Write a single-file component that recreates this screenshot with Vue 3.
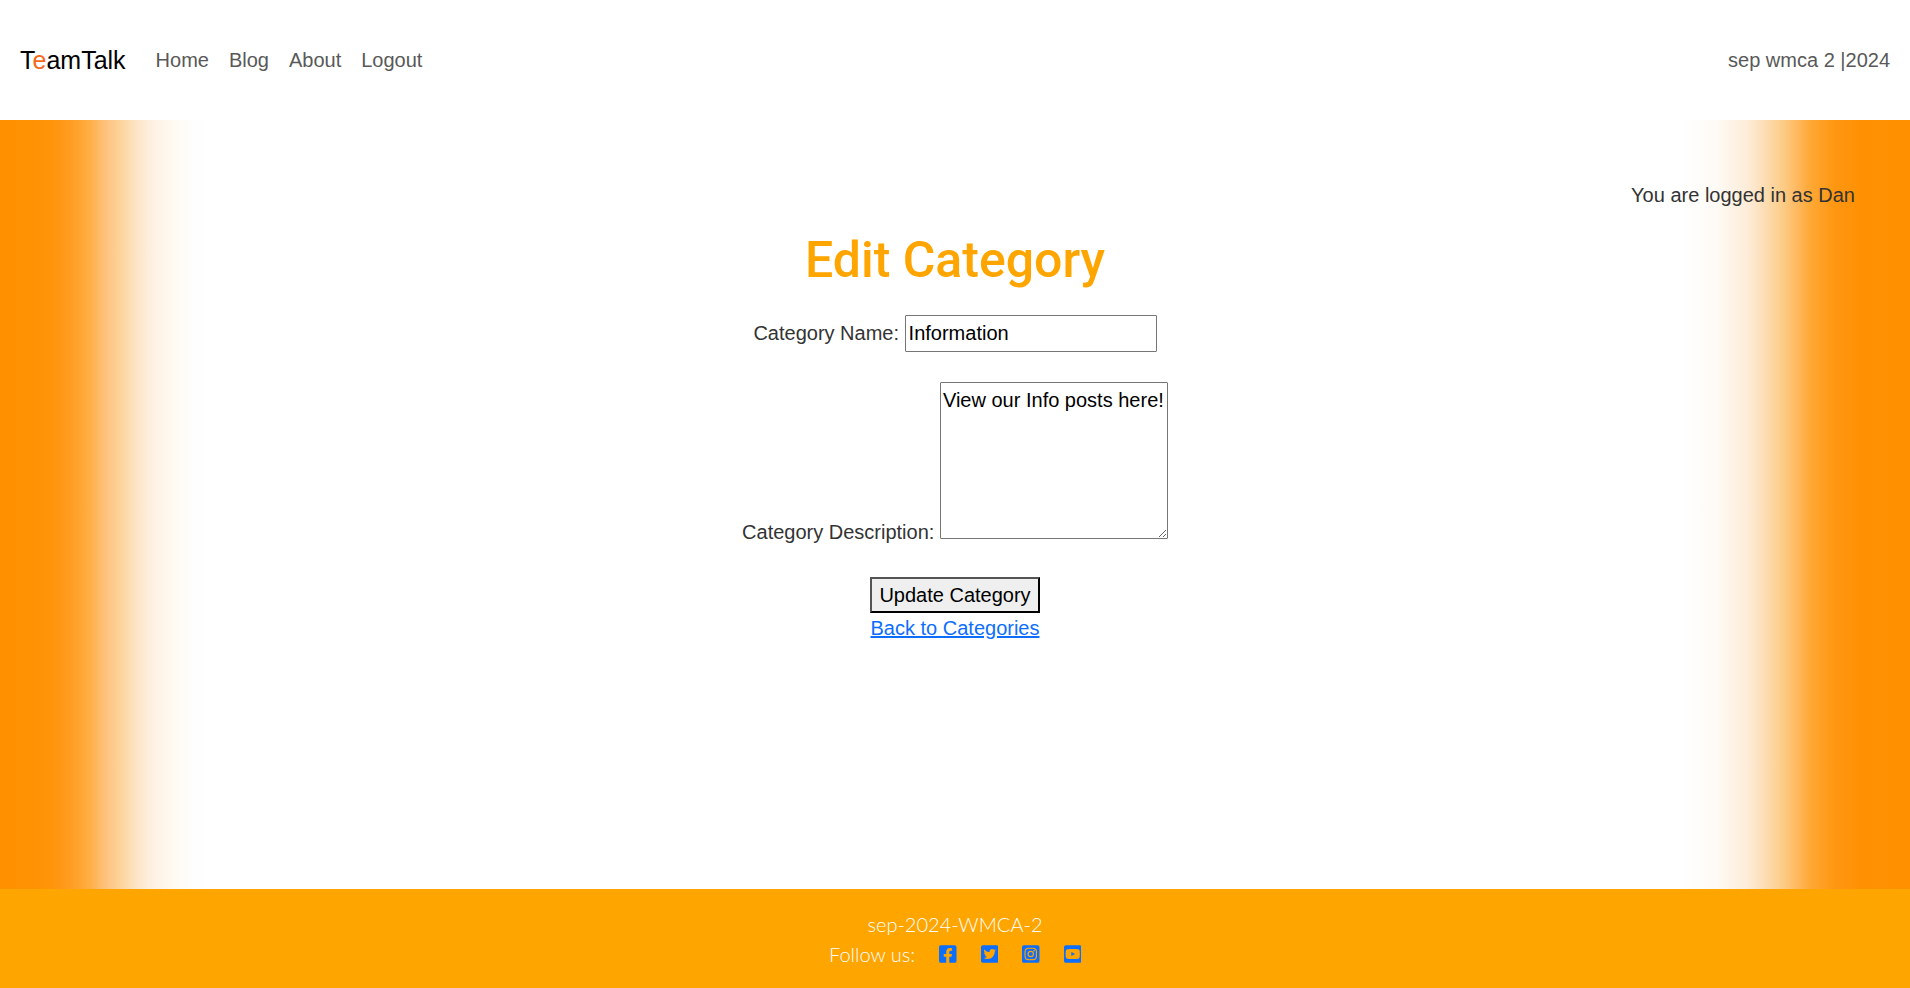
<script setup>
import { ref } from 'vue'

const navLinks = ['Home', 'Blog', 'About', 'Logout']
const name = ref('Information')
const description = ref('View our Info posts here!')

const socials = [
  {
    label: 'Facebook',
    path: 'M400 32H48A48 48 0 0 0 0 80v352a48 48 0 0 0 48 48h137.25V327.69h-63V256h63v-54.64c0-62.15 37-96.48 93.67-96.48 27.14 0 55.52 4.84 55.52 4.84v61h-31.27c-30.81 0-40.42 19.12-40.42 38.73V256h68.78l-11 71.69h-57.78V480H400a48 48 0 0 0 48-48V80a48 48 0 0 0-48-48z',
  },
  {
    label: 'Twitter',
    path: 'M400 32H48C21.5 32 0 53.5 0 80v352c0 26.5 21.5 48 48 48h352c26.5 0 48-21.5 48-48V80c0-26.5-21.5-48-48-48zm-48.9 158.8c.2 2.8.2 5.7.2 8.5 0 86.7-66 186.6-186.6 186.6-37.2 0-71.7-10.8-100.7-29.4 5.3.6 10.4.8 15.8.8 30.7 0 58.9-10.4 81.4-28-28.8-.6-53-19.5-61.3-45.5 10.1 1.5 19.2 1.5 29.6-1.2-30-6.1-52.5-32.5-52.5-64.4v-.8c8.7 4.9 18.9 7.9 29.6 8.3a65.447 65.447 0 0 1-29.2-54.6c0-12.2 3.2-23.4 8.9-33.1 32.3 39.8 80.8 65.8 135.2 68.6-9.3-44.5 24-80.6 64-80.6 18.9 0 35.9 7.9 47.9 20.7 14.8-2.8 29-8.3 41.6-15.8-4.9 15.2-15.2 28-28.8 36.1 13.2-1.4 26-5.1 37.8-10.2-8.9 13.1-20.1 24.7-32.9 34z',
  },
  {
    label: 'Instagram',
    path: 'M224,202.66A53.34,53.34,0,1,0,277.36,256,53.38,53.38,0,0,0,224,202.66Zm124.71-41a54,54,0,0,0-30.41-30.41c-21-8.29-71-6.43-94.3-6.43s-73.25-1.93-94.31,6.43a54,54,0,0,0-30.41,30.41c-8.28,21-6.43,71.05-6.43,94.33S91,329.26,99.32,350.33a54,54,0,0,0,30.41,30.41c21,8.29,71,6.43,94.31,6.43s73.24,1.93,94.3-6.43a54,54,0,0,0,30.41-30.41c8.35-21,6.43-71.05,6.43-94.33S357.1,182.74,348.75,161.67ZM224,338a82,82,0,1,1,82-82A81.9,81.9,0,0,1,224,338Zm85.38-148.3a19.14,19.14,0,1,1,19.13-19.14A19.1,19.1,0,0,1,309.42,189.74ZM400,32H48A48,48,0,0,0,0,80V432a48,48,0,0,0,48,48H400a48,48,0,0,0,48-48V80A48,48,0,0,0,400,32ZM382.88,322c-1.29,25.63-7.14,48.34-25.85,67s-41.4,24.63-67,25.85c-26.41,1.49-105.59,1.49-132,0-25.63-1.29-48.26-7.15-67-25.85s-24.63-41.42-25.85-67c-1.49-26.42-1.49-105.61,0-132,1.29-25.63,7.07-48.34,25.85-67s41.47-24.56,67-25.78c26.41-1.49,105.59-1.49,132,0,25.63,1.29,48.33,7.15,67,25.85s24.63,41.42,25.85,67.05C384.37,216.44,384.37,295.56,382.88,322Z',
  },
  {
    label: 'YouTube',
    path: 'M186.8 202.1l95.2 54.1-95.2 54.1V202.1zM448 80v352c0 26.5-21.5 48-48 48H48c-26.5 0-48-21.5-48-48V80c0-26.5 21.5-48 48-48h352c26.5 0 48 21.5 48 48zm-42 176.3s0-59.6-7.6-88.2c-4.2-15.8-16.5-28.2-32.2-32.4C337.9 128 224 128 224 128s-113.9 0-142.2 7.7c-15.7 4.2-28 16.6-32.2 32.4-7.6 28.5-7.6 88.2-7.6 88.2s0 59.6 7.6 88.2c4.2 15.8 16.5 27.7 32.2 31.9C110.1 384 224 384 224 384s113.9 0 142.2-7.7c15.7-4.2 28-16.1 32.2-31.9 7.6-28.5 7.6-88.1 7.6-88.1z',
  },
]
</script>

<template>
  <div class="page">
    <header class="header">
      <a class="brand" href="#">T<span class="accent">e</span>amTalk</a>
      <nav class="nav">
        <a v-for="link in navLinks" :key="link" class="nav-link" href="#">{{ link }}</a>
      </nav>
      <span class="cohort">sep wmca 2 |2024</span>
    </header>

    <main class="main">
      <p class="status">You are logged in as Dan</p>
      <h1 class="title">Edit Category</h1>
      <form class="form" @submit.prevent>
        <div class="row">
          <label for="name">Category Name: </label>
          <input id="name" v-model="name" class="field name" type="text" />
        </div>
        <div class="row">
          <label for="description">Category Description: </label>
          <textarea id="description" v-model="description" class="field description"></textarea>
        </div>
        <button class="submit" type="submit">Update Category</button>
      </form>
      <a class="back" href="#">Back to Categories</a>
    </main>

    <footer class="footer">
      <div>sep-2024-WMCA-2</div>
      <div class="follow">
        <span>Follow us:</span>
        <a v-for="s in socials" :key="s.label" class="social" href="#" :aria-label="s.label">
          <svg class="icon" viewBox="0 0 448 512" aria-hidden="true"><path :d="s.path" /></svg>
        </a>
      </div>
    </footer>
  </div>
</template>

<style>
body {
  margin: 0;
}
</style>

<style scoped>
.page {
  display: flex;
  flex-direction: column;
  min-height: 100vh;
  font: 20px/30px "Liberation Sans", Arial, sans-serif;
  color: #333;
  background: #fff;
}

.header {
  display: flex;
  align-items: center;
  min-height: 120px;
  padding: 0 20px;
  box-sizing: border-box;
  background: #fff;
}

.brand {
  margin-right: 30px;
  font-size: 25px;
  color: #000;
  text-decoration: none;
}

.accent {
  color: #f46a1b;
}

.nav {
  display: flex;
  gap: 20px;
}

.nav-link {
  color: #595959;
  text-decoration: none;
}

.cohort {
  margin-left: auto;
  color: #595959;
}

.main {
  display: flex;
  flex: 1;
  flex-direction: column;
  align-items: center;
  padding: 60px 55px;
  background: linear-gradient(
    90deg,
    #ff9100 0%,
    #ff9203 1.6%,
    #ff940a 2.6%,
    #ff9715 3.2%,
    #ffa028 3.9%,
    #ffae45 4.7%,
    #fdc27c 5.5%,
    #fdd39a 6.3%,
    #fde5c8 7.2%,
    #fdf1e3 8%,
    #fffaf2 9.1%,
    #fefefe 10.2%,
    #fff 11.2%,
    #fff 88%,
    #fefaf5 89.9%,
    #fdf3e5 90.7%,
    #fdecd8 91.5%,
    #fddfb8 92.3%,
    #fccb84 93.4%,
    #ffb85f 94.1%,
    #ffa835 94.8%,
    #ff9713 96%,
    #ff9003 97.4%,
    #ff9100 100%
  );
}

.status {
  align-self: flex-end;
  margin: 0 0 20px;
}

.title {
  margin: 0 0 25px;
  font: 500 50px/60px Roboto, sans-serif;
  color: #ffa500;
}

.form {
  text-align: center;
}

.row {
  margin-bottom: 30px;
}

.field {
  box-sizing: border-box;
  padding: 2px 3px;
  border: 1px solid #767676;
  border-radius: 1px;
  font: inherit;
  color: #000;
  background: #fff;
}

.name {
  width: 252px;
  height: 37px;
}

.description {
  width: 228px;
  height: 157px;
  padding: 2px;
  overflow: auto;
}

.submit {
  height: 36px;
  padding: 0 7px;
  border: 2px outset #000;
  border-radius: 0;
  font: inherit;
  color: #000;
  background: #efefef;
  vertical-align: top;
}

.back {
  color: #0d6efd;
}

.footer {
  padding: 20px 20px 19px;
  font-family: Lato, sans-serif;
  font-weight: 300;
  color: #fff;
  text-align: center;
  background: #ffa500;
}

.follow {
  display: flex;
  justify-content: center;
  align-items: center;
  gap: 24px;
}

.social {
  display: flex;
}

.icon {
  height: 20px;
  fill: #0d6efd;
}
</style>
